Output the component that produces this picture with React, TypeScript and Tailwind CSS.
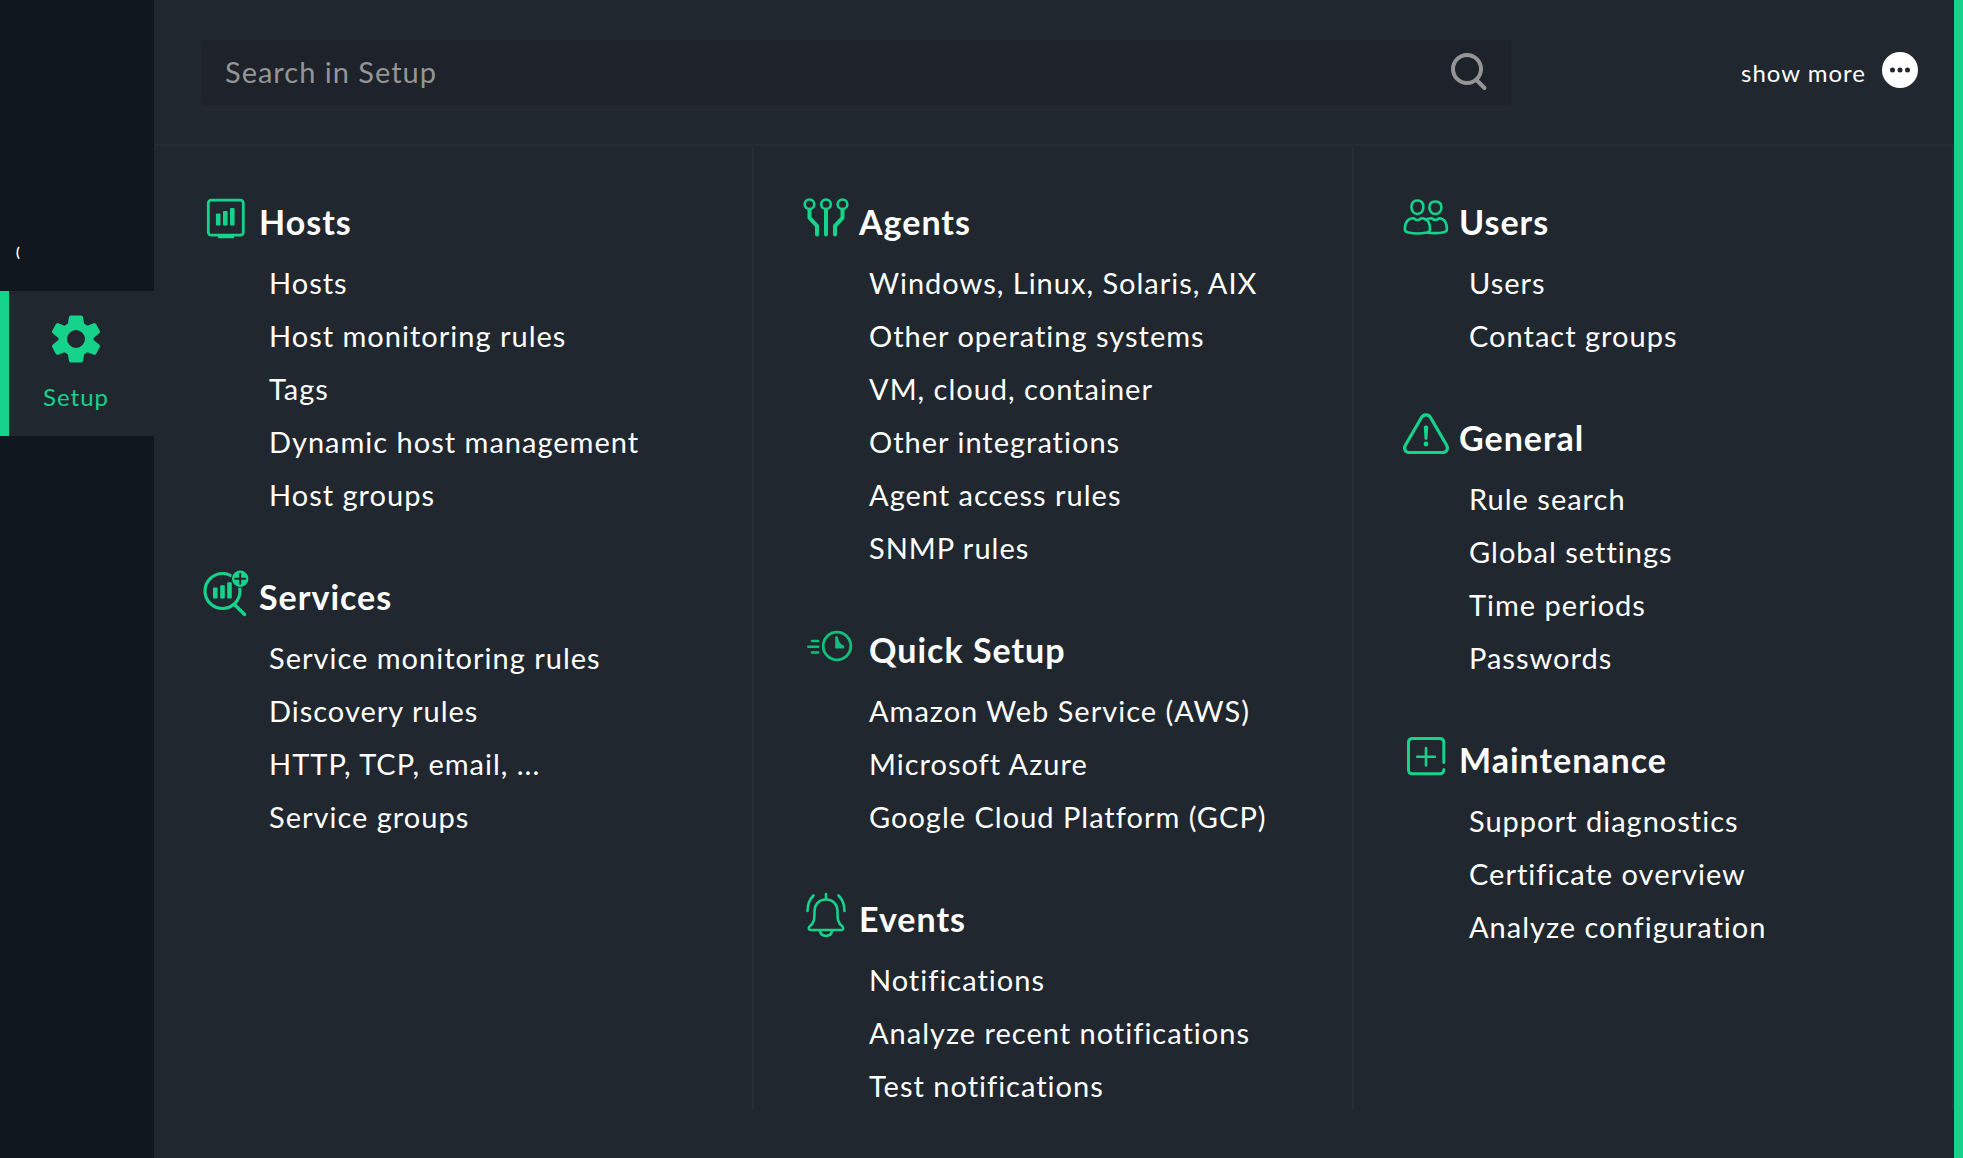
import type { ReactNode } from "react";

function Svg({ children, className = "w-12" }: { children: ReactNode; className?: string }) {
  return (
    <svg
      viewBox="0 0 48 48"
      className={`h-12 shrink-0 ${className}`}
      fill="none"
      stroke="currentColor"
      strokeWidth="3"
      strokeLinecap="round"
      strokeLinejoin="round"
      aria-hidden="true"
    >
      {children}
    </svg>
  );
}

const HostsIcon = () => (
  <Svg>
    <rect x="6.3" y="6.2" width="35" height="35" rx="3" strokeWidth="2.8" />
    <path d="M17 43h14" strokeWidth="2.4" />
    <g fill="currentColor" stroke="none">
      <rect x="13.900" y="19.400" width="4.600" height="12" rx="1" />
      <rect x="21" y="16.900" width="4.600" height="14.500" rx="1" />
      <rect x="28" y="13.900" width="4.600" height="17.500" rx="1" />
    </g>
  </Svg>
);

const ServicesIcon = () => (
  <Svg>
    <circle cx="20.500" cy="22" r="17.500" strokeWidth="3.200" />
    <path d="M33 36 42.500 45.500" strokeWidth="3.400" />
    <circle cx="38" cy="9.700" r="9.200" fill="#21272f" stroke="none" />
    <circle cx="38.200" cy="9.700" r="8.200" fill="currentColor" stroke="none" />
    <path d="M38.200 4.700v10M33.200 9.700h10" stroke="#21272f" strokeWidth="2" />
    <g fill="currentColor" stroke="none">
      <rect x="11" y="18.400" width="4.600" height="11.200" rx="1" />
      <rect x="18.200" y="16.200" width="4.600" height="13.400" rx="1" />
      <rect x="25.200" y="13.200" width="4.600" height="16.400" rx="1" />
    </g>
  </Svg>
);

const AgentsIcon = () => (
  <Svg>
    <g strokeWidth="2.600">
      <circle cx="7.500" cy="10.300" r="4.800" />
      <circle cx="24" cy="10.300" r="4.800" />
      <circle cx="40.500" cy="10.300" r="4.800" />
    </g>
    <g strokeWidth="4">
      <path d="M7.500 15.800v8l7.500 8V40.500M24 15.800V40.500M40.500 15.800v8l-7.500 8V40.500" />
    </g>
  </Svg>
);

const QuickIcon = () => (
  <Svg className="w-[58px] text-[#13bd7a]">
    <circle cx="30" cy="24" r="13.800" strokeWidth="2.800" />
    <path d="M28.200 15.200c.3-1.200 2.200-1.400 2.700-.2.600 4.500 2.500 7 5.700 8.600 1.400.8.900 3-.6 3H29.200c-.7 0-1-.4-1-1z" fill="currentColor" stroke="none" />
    <path d="M5 19h6.200M1.300 24.800h9.900M5 30.500h6.200" strokeWidth="2.600" />
  </Svg>
);

const EventsIcon = () => (
  <Svg>
    <g strokeWidth="2.600" transform="translate(0 -1.500)">
      <path d="M24 4.500v5" />
      <path d="M24 10c-7 0-11.500 5-11.500 11.500 0 8 0 12-5 15.500-1.500 2-.5 3.500 1 3.500h31c1.500 0 2.500-1.500 1-3.500-5-3.500-5-7.500-5-15.500C35.500 15 31 10 24 10z" />
      <path d="M18 41.500c1 6.500 11 6.500 12 0M11.500 6C7.500 10 5.500 15 5.500 21.500M36.500 6c4 4 6 9 6 15.500" />
    </g>
  </Svg>
);

const UsersIcon = () => (
  <Svg>
    <g strokeWidth="2.600" transform="translate(-.6 1)">
      <path d="M16 5.500c4 0 6 2.500 6 6.500s-2.500 7-6 7-6-3-6-7 2-6.500 6-6.500z" />
      <path d="M34 6.500c4 0 6 2.500 6 6s-2.500 6.500-6 6.500-6-3-6-6.500 2-6 6-6z" />
      <path d="M12.500 23.200c1.500 2.500 5.500 2.500 7 0 7 0 9.500 5 9 12-.2 1.300-1.500 1.800-3 2.200-6 1.300-13 1.300-18.500 0-2-.4-3.500-1-3.500-3 0-7 2.500-11.200 9-11.200z" />
      <path d="M24 24.500c2-.8 3.800-1.200 6.500-1.300 1.500 2.200 5.500 2.200 7 0 5.500.3 8 4.500 8 11 0 2-1 2.500-3 3-5 1.200-10.500 1.200-16.500.5" />
    </g>
  </Svg>
);

const GeneralIcon = () => (
  <Svg>
    <g transform="translate(0 1)">
      <path
        d="M19.500 6.500c2-3.500 7-3.500 9 0l16 27.500c2.200 3.800 0 7.500-4 7.500h-33c-4 0-6.200-3.700-4-7.500z"
        strokeWidth="3.200"
      />
      <path
        d="M21.800 16.500c0-1.500 1-2 2.200-2s2.200.5 2.200 2l-.7 11c0 .8-.6 1.400-1.500 1.400s-1.500-.6-1.500-1.400z"
        fill="currentColor"
        stroke="none"
      />
      <circle cx="24" cy="33" r="2.400" fill="currentColor" stroke="none" />
    </g>
  </Svg>
);

const MaintenanceIcon = () => (
  <Svg>
    <g transform="translate(0 1)">
      <path
        d="M41.800 29.500V9.500c0-2.500-1.700-4-4-4H10.500c-2.500 0-4 1.500-4 4v27.300c0 2.500 1.500 4 4 4h27.300c2.500 0 4-1.500 4-4.300"
        strokeWidth="3"
      />
      <path d="M24 15v17.500M15.200 23.800h17.600" strokeWidth="2.600" />
    </g>
  </Svg>
);

type Topic = { title: string; icon: ReactNode; items: string[] };

const columns: Topic[][] = [
  [
    {
      title: "Hosts",
      icon: <HostsIcon />,
      items: ["Hosts", "Host monitoring rules", "Tags", "Dynamic host management", "Host groups"],
    },
    {
      title: "Services",
      icon: <ServicesIcon />,
      items: ["Service monitoring rules", "Discovery rules", "HTTP, TCP, email, ...", "Service groups"],
    },
  ],
  [
    {
      title: "Agents",
      icon: <AgentsIcon />,
      items: [
        "Windows, Linux, Solaris, AIX",
        "Other operating systems",
        "VM, cloud, container",
        "Other integrations",
        "Agent access rules",
        "SNMP rules",
      ],
    },
    {
      title: "Quick Setup",
      icon: <QuickIcon />,
      items: ["Amazon Web Service (AWS)", "Microsoft Azure", "Google Cloud Platform (GCP)"],
    },
    {
      title: "Events",
      icon: <EventsIcon />,
      items: ["Notifications", "Analyze recent notifications", "Test notifications"],
    },
  ],
  [
    { title: "Users", icon: <UsersIcon />, items: ["Users", "Contact groups"] },
    {
      title: "General",
      icon: <GeneralIcon />,
      items: ["Rule search", "Global settings", "Time periods", "Passwords"],
    },
    {
      title: "Maintenance",
      icon: <MaintenanceIcon />,
      items: ["Support diagnostics", "Certificate overview", "Analyze configuration"],
    },
  ],
];

function TopicBlock({ title, icon, items }: Topic) {
  return (
    <section className="mb-12">
      <h2 className="flex h-[62px] items-start gap-[9px] pl-12 text-[34px] font-bold text-white">
        <span className="flex text-[#15d38b]">{icon}</span>
        <span className="pt-2 leading-10">{title}</span>
      </h2>
      <ul className="pl-[115px]">
        {items.map((item) => (
          <li key={item} className="flex h-[53px] items-center">
            <a href="#" className="text-[29px] leading-10 whitespace-nowrap text-white">
              {item}
            </a>
          </li>
        ))}
      </ul>
    </section>
  );
}

function GearIcon() {
  return (
    <svg viewBox="0 0 48 48" className="size-12" fill="currentColor" aria-hidden="true">
      <path
        fillRule="evenodd"
        d="M19 .5h10a2 2 0 0 1 2 1.600l1.200 6.700q1.800.8 3.300 1.900l6.200-2.400a2 2 0 0 1 2.400.8l3.600 6.600a2 2 0 0 1-.4 2.500L42.200 22.500a2 2 0 0 0 0 3l5.100 4.300a2 2 0 0 1 .4 2.500l-3.600 6.600a2 2 0 0 1-2.400.8l-6.200-2.400q-1.500 1.100-3.300 1.900L31 45.900a2 2 0 0 1-2 1.600H19a2 2 0 0 1-2-1.600l-1.200-6.700q-1.800-.8-3.300-1.900l-6.200 2.400a2 2 0 0 1-2.400-.8L.3 32.300a2 2 0 0 1 .4-2.500l5.100-4.300a2 2 0 0 0 0-3L.7 18.200a2 2 0 0 1-.4-2.500l3.600-6.600a2 2 0 0 1 2.400-.8l6.200 2.400q1.500-1.100 3.300-1.900L17 2.100A2 2 0 0 1 19 .5zM24 15a9 9 0 1 0 0 18 9 9 0 0 0 0-18z"
      />
    </svg>
  );
}

export default function App() {
  return (
    <div className="flex min-h-screen bg-[#21272f] font-['Lato',sans-serif] tracking-[1px]">
      <nav className="w-[154px] shrink-0 bg-[#10171e] pt-[232px]">
        <a href="#" aria-label="Customize" className="ml-4 flex h-[59px] text-[14px] leading-10 font-bold text-white">
          (
        </a>
        <a
          href="#"
          className="flex h-[145px] flex-col items-center gap-4 border-l-9 border-[#15d38b] bg-[#21272f] pt-6 pr-[11px] text-[24px] text-[#15d38b]"
        >
          <GearIcon />
          <span className="leading-9">Setup</span>
        </a>
      </nav>

      <main className="min-w-0 flex-1 border-r-9 border-[#15d38b]">
        <header className="flex h-[146px] items-start justify-between border-b-2 border-[#262d37] pt-10 pr-9 pl-12">
          <label className="flex h-[65px] w-[1309px] items-center rounded bg-[#1e222a] pr-[22px] pl-[23px]">
            <input
              type="text"
              aria-label="Search in Setup"
              placeholder="Search in Setup"
              className="min-w-0 flex-1 bg-transparent pb-0.5 text-[29px] tracking-[1px] text-white outline-none placeholder:text-[#959595]"
            />
            <svg
              viewBox="0 0 40 40"
              className="size-10 text-[#959595]"
              fill="none"
              stroke="currentColor"
              strokeWidth="4"
              strokeLinecap="round"
              aria-hidden="true"
            >
              <circle cx="18" cy="16" r="14" />
              <path d="M28 27.500 35.500 35" />
            </svg>
          </label>
          <button type="button" className="flex items-center gap-4 pt-[11px] text-[24px] text-white">
            <span className="pt-1.5 leading-8">show more</span>
            <svg viewBox="0 0 36 36" className="size-9" aria-hidden="true">
              <circle cx="18" cy="18" r="18" fill="#fff" />
              <g fill="#21272f">
                <circle cx="10.500" cy="18" r="2.500" />
                <circle cx="18" cy="18" r="2.500" />
                <circle cx="25.500" cy="18" r="2.500" />
              </g>
            </svg>
          </button>
        </header>

        <div className="grid grid-cols-3">
          {columns.map((topics, i) => (
            <div key={i} className="h-[964px] border-r-2 border-[#262d37] pt-12">
              {topics.map((topic) => (
                <TopicBlock key={topic.title} {...topic} />
              ))}
            </div>
          ))}
        </div>
      </main>
    </div>
  );
}
